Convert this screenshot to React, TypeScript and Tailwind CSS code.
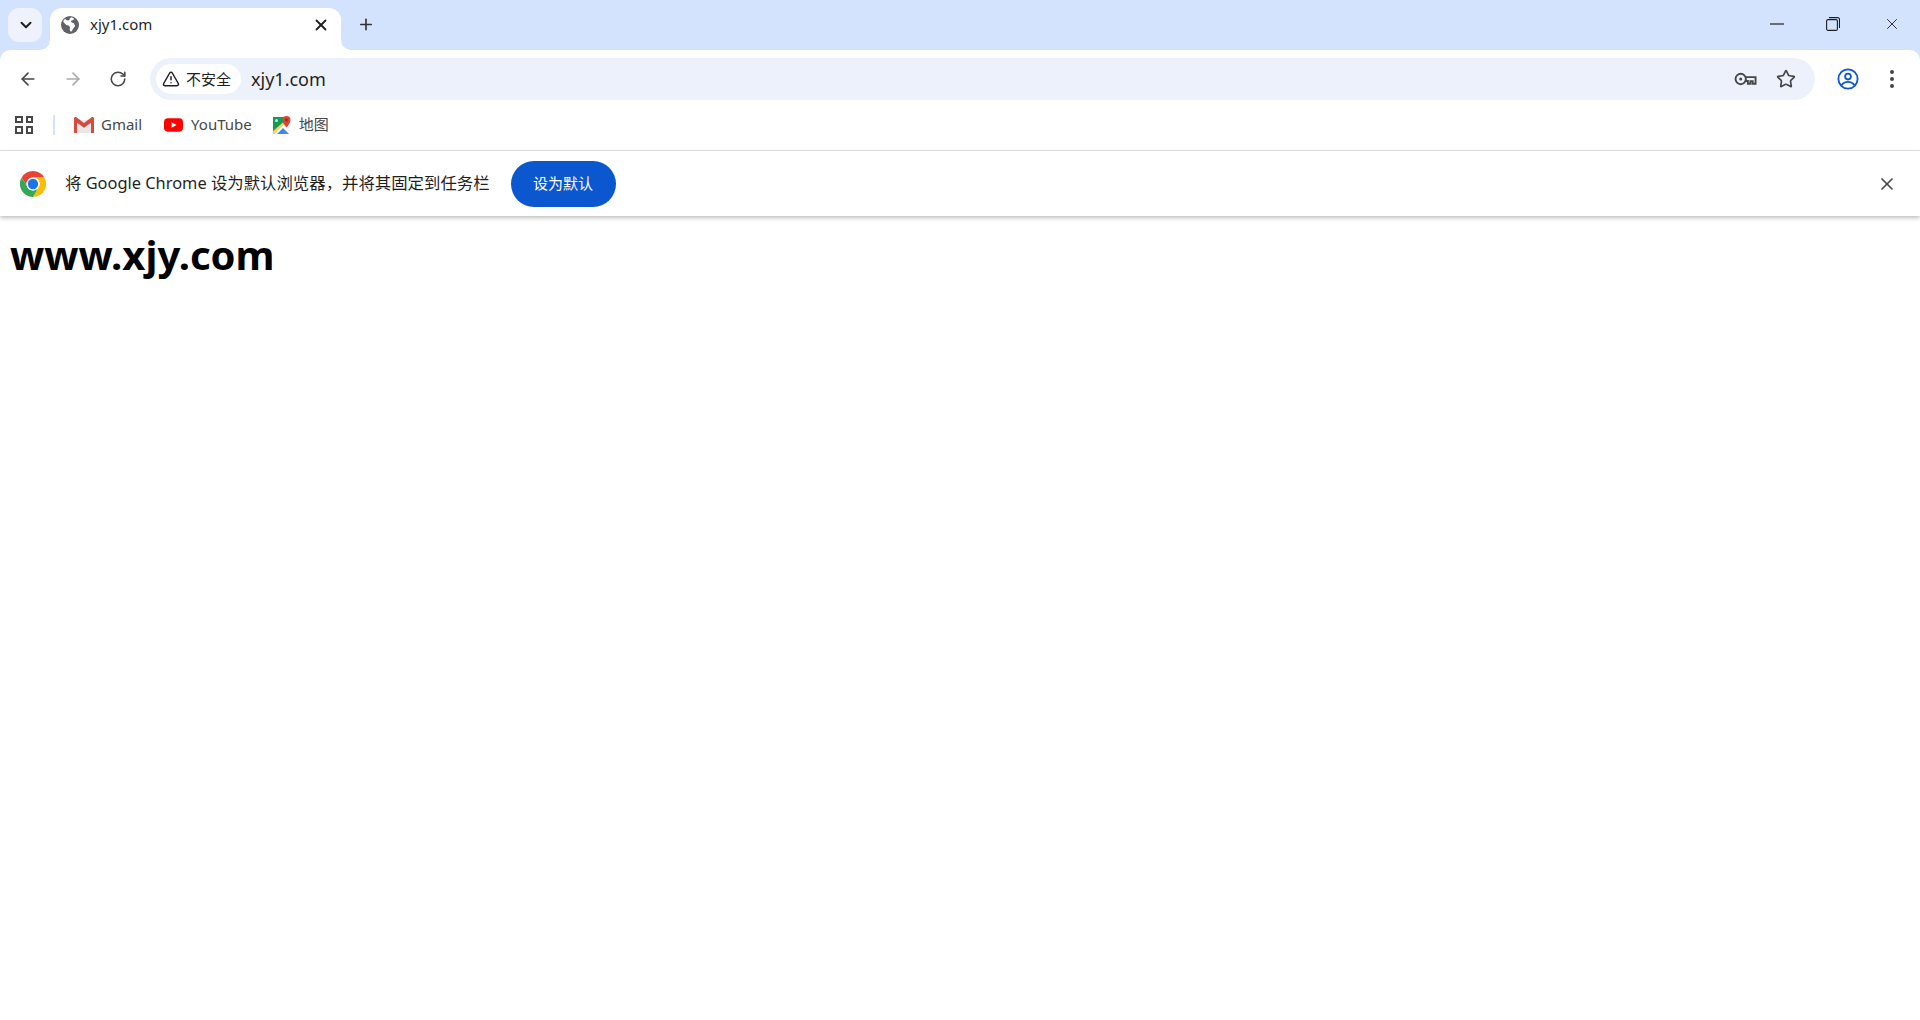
import { ArrowLeft, ArrowRight, ChevronDown, Plus, RotateCw, Star, TriangleAlert, X } from 'lucide-react'

const font = "font-['Noto_Sans','Noto_Sans_CJK_SC',sans-serif]"

function ChromeLogo() {
  return (
    <svg viewBox="0 0 48 48" className="w-[26px] h-[26px]">
      <path fill="#EA4335" d="M24 0A24 24 0 0 1 44.8 12H24A12 12 0 0 0 13.6 30L3.2 12A24 24 0 0 1 24 0Z" />
      <path fill="#FBBC04" d="M44.8 12A24 24 0 0 1 24 48L34.4 30A12 12 0 0 0 24 12Z" />
      <path fill="#34A853" d="M24 48A24 24 0 0 1 3.2 12L13.6 30A12 12 0 0 0 34.4 30Z" />
      <circle cx="24" cy="24" r="12" fill="#fff" />
      <circle cx="24" cy="24" r="9.5" fill="#1a73e8" />
    </svg>
  )
}

function GlobeIcon() {
  return (
    <svg viewBox="0 0 18 18" className="w-[18px] h-[18px]">
      <circle cx="9" cy="9" r="9" fill="#5f6368" />
      <path fill="#fff" d="M10.4 1.2 12.8 2.2l-.3 1.7-2 .6-.6 1.5 3.2 1.6 1 2.3-1.8 2.7-1.6 2.7-1.3.1-.7-2.2.3-2.2-1.4-1.4-2.2-.6-2.6-2.4C1.6 5 3 3.6 4.4 3l1.4 1.6 2.5-.3.6-2 1.5-1.1z" />
    </svg>
  )
}

function KeyIcon() {
  return (
    <svg viewBox="0 0 24 14" className="w-[23px] h-[14px]" fill="none" stroke="#474747" strokeWidth="2">
      <circle cx="7" cy="7" r="5.4" />
      <circle cx="7" cy="7" r="1.6" fill="#474747" stroke="none" />
      <path d="M12.4 5h10.1v7h-3v-2.6h-2.4V12h-2.6V9H12.4" />
    </svg>
  )
}

function ProfileIcon() {
  return (
    <svg viewBox="0 0 22 22" className="w-[22px] h-[22px]" fill="none" stroke="#0b57d0" strokeWidth="1.8">
      <circle cx="11" cy="11" r="9.6" />
      <circle cx="11" cy="8.6" r="2.9" />
      <path d="M4.4 17.2c1.6-2.2 4-3.4 6.6-3.4s5 1.2 6.6 3.4" />
    </svg>
  )
}

function GmailIcon() {
  return (
    <svg viewBox="0 0 20 16" className="w-[20px] h-[16px]">
      <path fill="#e8e8e8" d="M3 3h14v13H3z" />
      <path fill="#d54c3f" d="M0 1.5C0 .3 1.4-.4 2.4.3L10 6l7.6-5.700C18.600-.4 20 .3 20 1.500V16h-3V5.800L10 10.800 3 5.800V16H0z" />
    </svg>
  )
}

function YoutubeIcon() {
  return (
    <svg viewBox="0 0 20 14" className="w-[19px] h-[14px]">
      <rect width="20" height="14" rx="4" fill="#ff0000" />
      <path fill="#fff" d="M8 4l5.200 3L8 10z" />
    </svg>
  )
}

function MapsIcon() {
  return (
    <svg viewBox="0 0 18 18" className="w-[18px] h-[18px]">
      <path fill="#0f9d58" d="M0 1h12v6L1 17H0z" />
      <path fill="#4285f4" d="M4 18l6-6 6 6z" />
      <path fill="#ffd04b" d="M0 15L10.500 6l1 1.500L1.500 18H0z" />
      <path fill="#fff" d="M2 4.500a1.500 1.500 0 1 0 3 0 1.500 1.500 0 1 0-3 0" opacity="0.8" />
      <path fill="#db4437" d="M13.500 0a4 4 0 0 0-4 4c0 3 4 7.500 4 7.500s4-4.500 4-7.500a4 4 0 0 0-4-4z" />
      <circle cx="13.500" cy="4" r="1.400" fill="#a52714" />
    </svg>
  )
}

function TabFlare({ side }: { side: 'left' | 'right' }) {
  return (
    <svg
      viewBox="0 0 10 10"
      className={side === 'left' ? 'absolute bottom-0 -left-[10px] w-[10px] h-[10px]' : 'absolute bottom-0 -right-[10px] w-[10px] h-[10px]'}
    >
      <path fill="#fff" d={side === 'left' ? 'M10 0v10H0a10 10 0 0 0 10-10z' : 'M0 0v10h10A10 10 0 0 1 0 0z'} />
    </svg>
  )
}

export default function App() {
  return (
    <div className={`${font} h-[1020px] bg-white overflow-hidden`}>
      <div className="bg-[#d3e3fd]">
        {/* tab strip */}
        <div className="h-[50px] flex items-end">
          <div className="ml-2 mb-2 w-[34px] h-[34px] rounded-[11px] bg-[#edf2fc] flex items-center justify-center">
            <ChevronDown size={18} strokeWidth={2.6} color="#1f1f1f" className="ml-px" />
          </div>
          <div className="relative ml-2 w-[291px] h-[42px] bg-white rounded-t-[12px] flex items-center pl-[11px] pr-[11px] pb-[9px]">
            <TabFlare side="left" />
            <TabFlare side="right" />
            <GlobeIcon />
            <span className="ml-[11px] text-[15px] text-[#1f1f1f]">xjy1.com</span>
            <X size={18} strokeWidth={2.4} color="#1f1f1f" className="ml-auto" />
          </div>
          <div className="ml-[16px] mb-[9px] w-[18px] h-[34px] flex items-center">
            <Plus size={19} strokeWidth={2.2} color="#333" />
          </div>
          <div className="ml-auto self-stretch flex items-center pr-[19px] pb-[2px]">
            <svg viewBox="0 0 14 2" className="w-[14px] h-[2px] mr-[42px]">
              <path d="M0 1h14" stroke="#1f1f1f" strokeWidth="1.2" />
            </svg>
            <svg viewBox="0 0 14 14" className="w-[14px] h-[14px] mr-[43px]" fill="none" stroke="#1f1f1f" strokeWidth="1.1">
              <rect x="0.6" y="2.600" width="10.800" height="10.800" rx="1.500" />
              <path d="M3 0.600h8.500a2 2 0 0 1 2 2V11" />
            </svg>
            <X size={18} strokeWidth={1.2} color="#1f1f1f" />
          </div>
        </div>

        {/* toolbar */}
        <div className="h-[58px] bg-white rounded-t-[10px] flex items-center pr-[17px]">
          <div className="w-[150px] flex items-center shrink-0 pl-[18px]">
            <ArrowLeft size={20} strokeWidth={2} color="#474747" />
            <ArrowRight size={20} strokeWidth={2} color="#aaaaaa" className="ml-[25px]" />
            <RotateCw size={18} strokeWidth={2.1} color="#474747" className="ml-[26px]" />
          </div>
          <div className="flex-1 h-[42px] rounded-full bg-[#ecf1fb] flex items-center pl-[6px] pr-[19px]">
            <div className="h-[30px] w-[85px] rounded-full bg-white flex items-center pl-[6px]">
              <TriangleAlert size={18} strokeWidth={2} color="#1f1f1f" />
              <span className="ml-[6px] text-[15px] text-[#1f1f1f] whitespace-nowrap">不安全</span>
            </div>
            <span className="ml-[10px] text-[18px] text-[#1f1f1f]">xjy1.com</span>
            <div className="ml-auto flex items-center gap-[19px]">
              <KeyIcon />
              <Star size={20} strokeWidth={2} color="#474747" />
            </div>
          </div>
          <div className="w-[50px] flex justify-end shrink-0 pr-[6px]">
            <ProfileIcon />
          </div>
          <div className="w-[28px] flex justify-center flex-col items-end pr-[9px] gap-[3px] shrink-0 ml-[10px]">
            <span className="w-[4px] h-[4px] rounded-full bg-[#474747]" />
            <span className="w-[4px] h-[4px] rounded-full bg-[#474747]" />
            <span className="w-[4px] h-[4px] rounded-full bg-[#474747]" />
          </div>
        </div>
      </div>

      {/* bookmarks */}
      <div className="h-[43px] pb-[9px] flex items-center border-b border-[#e3e3e3]">
        <div className="ml-[15px] w-[18px] h-[18px] grid grid-cols-2 gap-[3px]">
          <span className="border-2 border-[#474747]" />
          <span className="border-2 border-[#474747]" />
          <span className="border-2 border-[#474747]" />
          <span className="border-2 border-[#474747]" />
        </div>
        <div className="ml-[20px] w-[2px] h-[20px] bg-[#d3e3fd]" />
        <div className="ml-[19px] flex items-center gap-[7px]">
          <GmailIcon />
          <span className="text-[15px] text-[#474747]">Gmail</span>
        </div>
        <div className="ml-[22px] flex items-center gap-[8px]">
          <YoutubeIcon />
          <span className="text-[15px] text-[#474747]">YouTube</span>
        </div>
        <div className="ml-[21px] flex items-center gap-[8px]">
          <MapsIcon />
          <span className="text-[15px] text-[#474747]">地图</span>
        </div>
      </div>

      {/* default browser bar */}
      <div className="h-[65px] flex items-center shadow-[0_2px_4px_rgba(0,0,0,0.25)] relative">
        <div className="ml-[20px]">
          <ChromeLogo />
        </div>
        <span className="ml-[19px] text-[16.4px] text-[#1f1f1f] whitespace-nowrap">将 Google Chrome 设为默认浏览器，并将其固定到任务栏</span>
        <button className="ml-[21px] w-[105px] h-[46px] rounded-full bg-[#0b57d0] text-white text-[15px]">设为默认</button>
        <X size={20} strokeWidth={2} color="#474747" className="ml-auto mr-[23px]" />
      </div>

      <h1 className="mt-[10px] ml-[10px] text-[40px] leading-[58px] font-bold text-black">www.xjy.com</h1>
    </div>
  )
}
